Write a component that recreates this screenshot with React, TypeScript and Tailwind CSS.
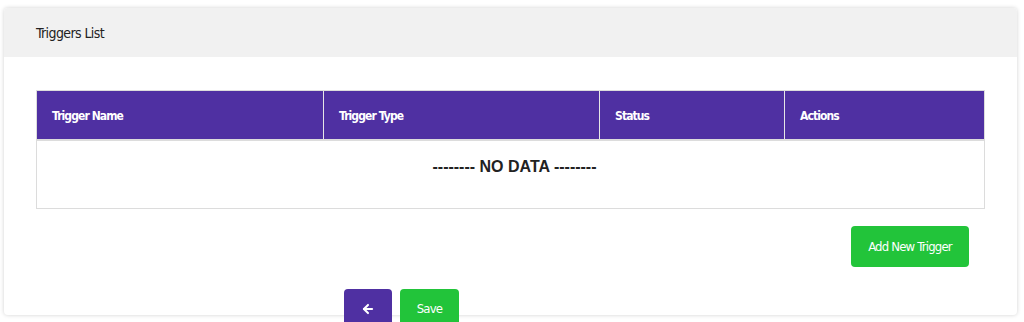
import React from 'react';
import { ArrowLeft } from 'lucide-react';

const columns = [
  { label: 'Trigger Name', width: 'w-[287px]' },
  { label: 'Trigger Type', width: 'w-[276px]' },
  { label: 'Status', width: 'w-[185px]' },
  { label: 'Actions', width: 'flex-1' },
];

export default function App() {
  return (
    <div className="min-h-[322px] bg-white pt-2 pl-1 font-['DejaVu_Sans_Condensed','Liberation_Sans',sans-serif]">
      <div className="w-[1013px] h-[307px] rounded bg-white shadow-[0_0_4px_rgba(0,0,0,0.18)]">
        {/* Card header */}
        <div className="h-[49px] flex items-center px-8 pt-[2px] bg-[#f1f1f1] rounded-t">
          <span className="text-[14px] tracking-[-0.6px] text-[#222]">Triggers List</span>
        </div>

        <div className="px-8 pt-[33px]">
          {/* Table */}
          <div className="border border-[#dcdcdc]">
            <div className="flex h-[50px] bg-[#4f30a2] border-b-2 border-[#dcdcdc]">
              {columns.map((col, i) => (
                <div
                  key={col.label}
                  className={`${col.width} flex items-center pl-[15px] pt-[2px] text-[12px] tracking-[-0.9px] font-bold text-white ${i < columns.length - 1 ? 'border-r border-[#e6e6e6]' : ''}`}
                >
                  {col.label}
                </div>
              ))}
            </div>
            <div className="h-[67px] flex justify-center pl-2 pt-[14px]">
              <span className="font-['Liberation_Sans',sans-serif] font-bold text-[16px] text-[#222]">
                -------- NO DATA --------
              </span>
            </div>
          </div>

          <div className="flex justify-end pr-4 mt-[17px]">
            <button className="h-[41px] w-[118px] rounded bg-[#22c43a] text-white text-[13px] tracking-[-0.8px]">
              Add New Trigger
            </button>
          </div>

          <div className="flex gap-2 pl-[308px] mt-[22px]">
            <button className="h-[40px] w-[48px] rounded bg-[#4f30a2] text-white flex items-center justify-center">
              <ArrowLeft className="w-[14px] h-[14px]" strokeWidth={3.5} />
            </button>
            <button className="h-[40px] w-[59px] rounded bg-[#22c43a] text-white text-[13px] tracking-[-0.8px]">
              Save
            </button>
          </div>
        </div>
      </div>
    </div>
  );
}
